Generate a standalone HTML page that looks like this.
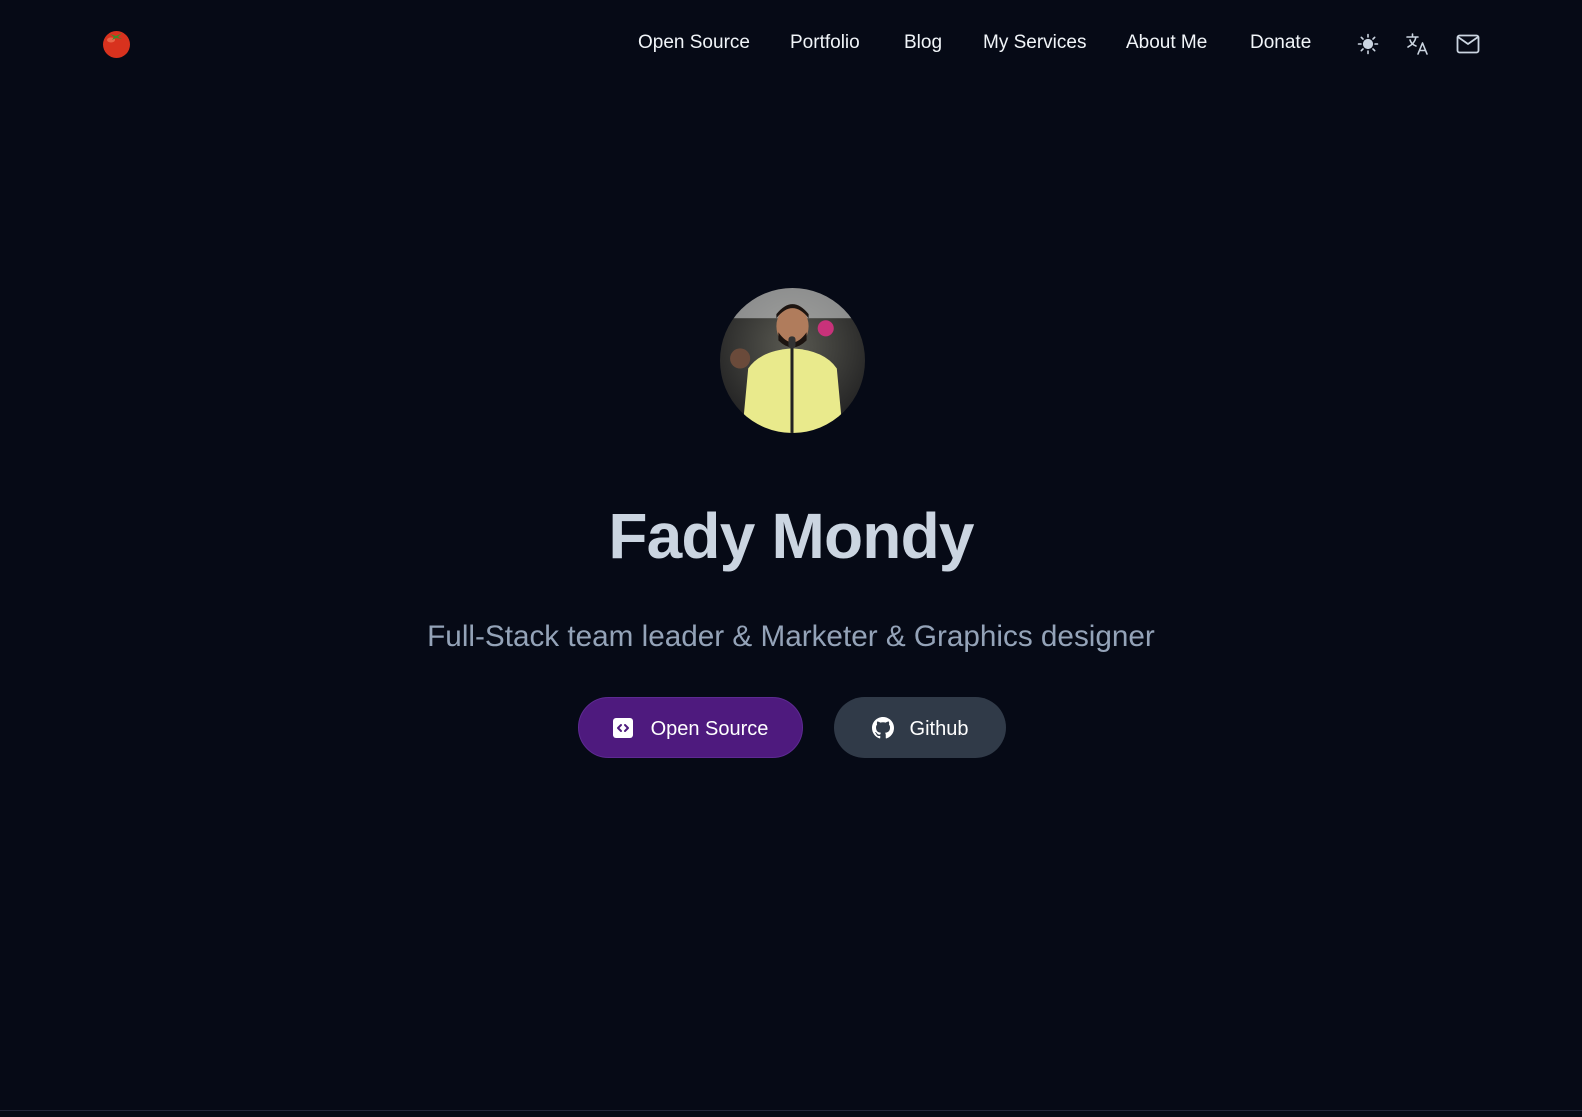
<!DOCTYPE html>
<html><head><meta charset="utf-8"><style>
html,body{margin:0;padding:0}
body{width:1582px;height:1117px;background:#060a16;font-family:"Liberation Sans",sans-serif;position:relative;overflow:hidden;color:#fff}
.nav{position:absolute;top:32px;font-size:19px;color:#f1f5f9;white-space:nowrap}
.ic{position:absolute}
h1{position:absolute;top:499px;left:0;width:1582px;text-align:center;margin:0;font-size:64px;font-weight:bold;color:#cbd5e1;letter-spacing:-0.8px}
.sub{position:absolute;top:620px;left:0;width:1582px;text-align:center;font-size:29.7px;color:#94a3b8}
.btn{position:absolute;top:697px;height:61px;border-radius:31px;display:flex;align-items:center;justify-content:center;font-size:20px;color:#fff;box-sizing:border-box;padding-top:3px}
.line{position:absolute;left:0;top:1110px;width:1582px;height:1px;background:#23263a}
</style></head><body>
<svg class="ic" style="left:101px;top:28px" width="31" height="30" viewBox="0 0 31 30"><circle cx="15.5" cy="16.5" r="13.5" fill="#d8321e"/><ellipse cx="10" cy="12" rx="4" ry="2.5" fill="#f07a5a" opacity=".7"/><path d="M9 6 L15 8 L21 5 L17 9 L21 11 L15 10 L11 12 L13 9Z" fill="#3f8a2a"/></svg>
<div class="nav" style="left:638px">Open Source</div>
<div class="nav" style="left:790px">Portfolio</div>
<div class="nav" style="left:904px">Blog</div>
<div class="nav" style="left:983px">My Services</div>
<div class="nav" style="left:1126px">About Me</div>
<div class="nav" style="left:1250px">Donate</div>
<svg class="ic" style="left:1357px;top:33px" width="22" height="22" viewBox="0 0 22 22" stroke="#cbd5e1" stroke-width="1.6" stroke-linecap="round"><circle cx="11" cy="11" r="4.3" fill="#cbd5e1"/><path d="M11 1.5v2.5M11 18v2.5M1.5 11H4M18 11h2.5M4.3 4.3l1.7 1.7M16 16l1.7 1.7M4.3 17.7 6 16M16 6l1.7-1.7"/></svg>
<svg class="ic" style="left:1406px;top:32px" width="24" height="24" viewBox="0 0 24 24" fill="none" stroke="#cbd5e1" stroke-width="1.6" stroke-linecap="round" stroke-linejoin="round"><path d="M1 5h11M6.5 2v3M10 5c-1 5-4 8-8 10M4 8c1 3 3 5 6 6"/><path d="M12 22l4.5-11L21 22M13.5 18.5h6"/></svg>
<svg class="ic" style="left:1456px;top:34px" width="24" height="20" viewBox="0 0 24 20" fill="none" stroke="#cbd5e1" stroke-width="1.8" stroke-linejoin="round"><rect x="1.5" y="1.5" width="21" height="17" rx="2"/><path d="M2 3l10 7 10-7"/></svg>
<svg class="ic" style="left:720px;top:288px" width="145" height="145" viewBox="0 0 144 144"><defs><clipPath id="c"><circle cx="72" cy="72" r="72"/></clipPath><radialGradient id="g" cx=".5" cy=".4" r=".7"><stop offset="0" stop-color="#5a5a52"/><stop offset="1" stop-color="#1a1a1c"/></radialGradient></defs><g clip-path="url(#c)"><rect width="144" height="144" fill="url(#g)"/><rect x="0" y="0" width="144" height="30" fill="#e8eaec" opacity=".5"/><circle cx="105" cy="40" r="8" fill="#c8327a"/><circle cx="20" cy="70" r="10" fill="#6a4a3a"/><path d="M22 144 L28 80 Q40 62 72 60 Q104 62 116 80 L122 144Z" fill="#e9ea8c"/><ellipse cx="72" cy="38" rx="16" ry="20" fill="#b07c5c"/><path d="M56 30 Q72 10 88 30 L88 26 Q72 6 56 26Z" fill="#1c1410"/><path d="M58 44 Q72 64 86 44 L86 52 Q72 66 58 52Z" fill="#1c1410"/><rect x="70" y="55" width="3" height="89" fill="#222"/><rect x="68" y="48" width="7" height="12" rx="3" fill="#333"/></g></svg>
<h1>Fady Mondy</h1>
<div class="sub">Full-Stack team leader &amp; Marketer &amp; Graphics designer</div>
<div class="btn" style="left:578px;width:225px;background:#4e1a7e;border:1px solid #5d2a92">
<svg width="20" height="20" viewBox="0 0 20 20" style="margin-right:18px;margin-top:-3px"><rect x="0" y="0" width="20" height="20" rx="3" fill="#fff"/><path d="M8 7l-3 3 3 3M12 7l3 3-3 3" stroke="#4e1a7e" stroke-width="2" fill="none" stroke-linecap="round" stroke-linejoin="round"/></svg>Open Source</div>
<div class="btn" style="left:834px;width:172px;background:#303a48">
<svg width="22" height="22" viewBox="0 0 16 16" style="margin-right:16px;margin-top:-3px"><path fill="#fff" d="M8 0C3.58 0 0 3.58 0 8c0 3.54 2.29 6.53 5.47 7.59.4.07.55-.17.55-.38 0-.19-.01-.82-.01-1.49-2.01.37-2.53-.49-2.69-.94-.09-.23-.48-.94-.82-1.13-.28-.15-.68-.52-.01-.53.63-.01 1.08.58 1.23.82.72 1.21 1.87.87 2.33.66.07-.52.28-.87.51-1.07-1.78-.2-3.64-.89-3.64-3.95 0-.87.31-1.59.82-2.15-.08-.2-.36-1.02.08-2.12 0 0 .67-.21 2.2.82.64-.18 1.32-.27 2-.27.68 0 1.36.09 2 .27 1.53-1.04 2.2-.82 2.2-.82.44 1.1.16 1.92.08 2.12.51.56.82 1.27.82 2.15 0 3.07-1.87 3.75-3.65 3.95.29.25.54.73.54 1.48 0 1.07-.01 1.93-.01 2.2 0 .21.15.46.55.38A8.013 8.013 0 0016 8c0-4.42-3.58-8-8-8z"/></svg>Github</div>
<div class="line"></div>
</body></html>
